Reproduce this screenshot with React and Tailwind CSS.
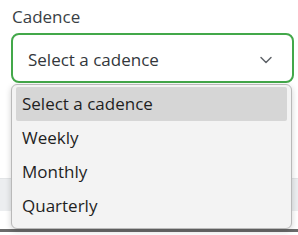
import { ChevronDown } from 'lucide-react';

const options = ['Select a cadence', 'Weekly', 'Monthly', 'Quarterly'];

export default function App() {
  return (
    <div className="relative w-[298px] h-[235px] overflow-hidden bg-white font-['Open_Sans',sans-serif]">
      <div className="pl-[12px] pt-[5px] text-[17px] leading-[24px] text-[#3a3f45]">Cadence</div>
      <div className="ml-[11px] mt-[4px] w-[283px] h-[50px] rounded-[8px] border-2 border-[#43a84a] bg-white flex items-center justify-between pl-[15px] pr-[16px] pt-[3px]">
        <span className="text-[17px] text-[#33373c]">Select a cadence</span>
        <ChevronDown size={20} strokeWidth={1.75} className="text-[#5f6368]" />
      </div>
      <div className="mt-[95px] h-[33px] bg-[#eceef0] border-t border-[#e2e4e6]" />
      <div className="mt-[18px] h-[3px] bg-[#6b6b6b]" />

      <div className="absolute left-[11px] top-[84px] w-[281px] h-[145px] rounded-[6px] border border-[#b9b9b9] bg-[#f3f3f3] shadow-[0_2px_6px_rgba(0,0,0,0.18)] px-[4px] pt-[2px]">
        {options.map((opt, i) => (
          <div
            key={opt}
            className={`h-[34px] flex items-center pl-[6px] text-[17px] text-[#1f1f1f] rounded-[2px] ${
              i === 0 ? 'bg-[#d6d6d6]' : ''
            }`}
          >
            {opt}
          </div>
        ))}
      </div>
    </div>
  );
}
